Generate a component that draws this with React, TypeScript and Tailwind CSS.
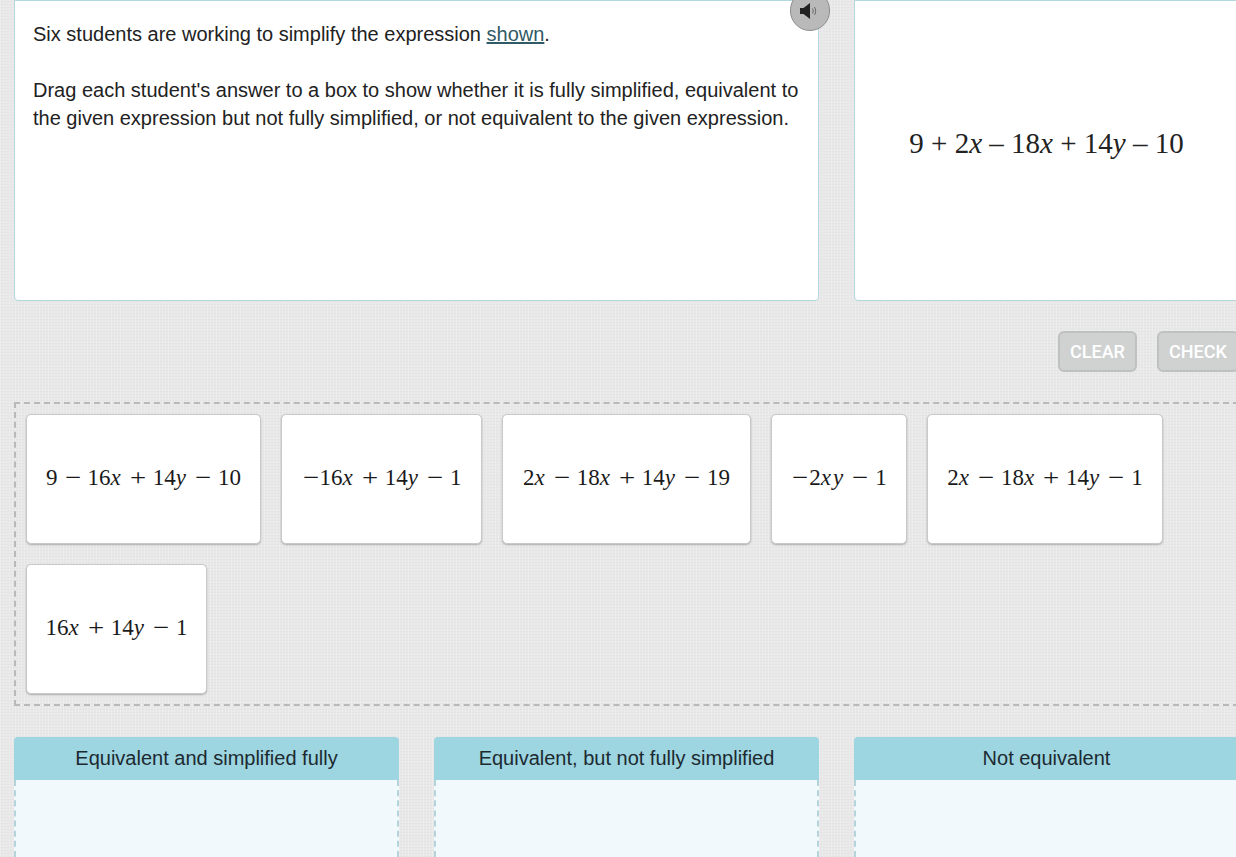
const sans = "font-['Liberation_Sans',Arial,sans-serif]"

// one math token: v = italic variable, o = operator with side space
type Tok = { t: string; k?: 'v' | 'o' | 'u' }

const n = (t: string): Tok => ({ t })
const v = (t: string): Tok => ({ t, k: 'v' })
const o = (t: string): Tok => ({ t, k: 'o' })
const u = (t: string): Tok => ({ t, k: 'u' })

const cards: { w: string; toks: Tok[] }[] = [
  { w: 'w-[235px]', toks: [n('9'), o('−'), n('16'), v('x'), o('+'), n('14'), v('y'), o('−'), n('10')] },
  { w: 'w-[201px]', toks: [u('−'), n('16'), v('x'), o('+'), n('14'), v('y'), o('−'), n('1')] },
  { w: 'w-[249px]', toks: [n('2'), v('x'), o('−'), n('18'), v('x'), o('+'), n('14'), v('y'), o('−'), n('19')] },
  { w: 'w-[136px]', toks: [u('−'), n('2'), v('xy'), o('−'), n('1')] },
  { w: 'w-[236px]', toks: [n('2'), v('x'), o('−'), n('18'), v('x'), o('+'), n('14'), v('y'), o('−'), n('1')] },
  { w: 'w-[181px]', toks: [n('16'), v('x'), o('+'), n('14'), v('y'), o('−'), n('1')] },
]

function MathText({ toks }: { toks: Tok[] }) {
  return (
    <span className="font-['Liberation_Serif','Times_New_Roman',serif] text-[23px] leading-none text-[#1a1a1a] whitespace-nowrap -mt-[3px]">
      {toks.map((tok, i) => {
        if (tok.k === 'v') return <i key={i} className="tracking-[2px]">{tok.t}</i>
        if (tok.k === 'o') return <span key={i} className="inline-block w-[18px] mx-[6px] text-center scale-x-125">{tok.t}</span>
        if (tok.k === 'u') return <span key={i} className="inline-block w-[18px] text-center scale-x-125">{tok.t}</span>
        return <span key={i}>{tok.t}</span>
      })}
    </span>
  )
}

function SpeakerIcon() {
  return (
    <svg width="22" height="20" viewBox="0 0 22 20" fill="none">
      <path d="M1 7h3.500L11 2v16l-6.500-5H1z" fill="#222" />
      <path d="M13.500 7.500c1 1.500 1 3.500 0 5" stroke="#555" strokeWidth="0.8" />
      <path d="M15.500 6c1.600 2.500 1.600 5.500 0 8" stroke="#555" strokeWidth="0.8" />
    </svg>
  )
}

function Bin({ title }: { title: string }) {
  return (
    <div className="w-[385px] shrink-0 h-[120px]">
      <div className={`h-[43px] pb-[2px] bg-[#9dd5e1] rounded-t-[4px] flex items-center justify-center text-[20px] text-[#1c2a30] ${sans}`}>
        {title}
      </div>
      <div className="h-[77px] bg-[#f1f9fc] border-x-2 border-dashed border-[#b4d3da]" />
    </div>
  )
}

export default function App() {
  return (
    <div className={`relative w-[1236px] h-[857px] overflow-hidden bg-[#e8e8e8] bg-[repeating-linear-gradient(90deg,rgba(255,255,255,0.22)_0px,rgba(255,255,255,0.22)_1px,transparent_1px,transparent_3px),repeating-linear-gradient(0deg,rgba(0,0,0,0.02)_0px,rgba(0,0,0,0.02)_1px,transparent_1px,transparent_3px)] pl-[14px] ${sans}`}>
      {/* Prompt + given expression */}
      <div className="flex gap-[35px] w-[1225px]">
        <div className="relative w-[805px] h-[301px] shrink-0 bg-white border border-[#b3d8df] rounded-b-[4px] pl-[18px] pr-[16px] pt-[19px] text-[20px] leading-[28px] text-[#222]">
          <p>
            Six students are working to simplify the expression{' '}
            <span className="text-[#2f5a66] underline">shown</span>.
          </p>
          <p className="mt-[28px]">
            Drag each student's answer to a box to show whether it is fully simplified, equivalent to the given expression but not fully simplified, or not equivalent to the given expression.
          </p>
          <button className="absolute right-[-12px] top-[-11px] w-[40px] h-[41px] rounded-full bg-[#b9b9b9] border border-[#8e8e8e] flex items-center justify-center">
            <SpeakerIcon />
          </button>
        </div>
        <div className="w-[385px] h-[301px] shrink-0 bg-white border border-[#b3d8df] rounded-b-[4px] flex items-center justify-center pb-[14px]">
          <span className="font-['Liberation_Serif','Times_New_Roman',serif] text-[29px] text-[#222] whitespace-nowrap">
            9 + 2<i>x</i> – 18<i>x</i> + 14<i>y</i> – 10
          </span>
        </div>
      </div>

      {/* Buttons */}
      <div className="flex justify-end gap-[20px] mt-[30px] w-[1225px] h-[41px]">
        <button className="w-[79px] h-[41px] rounded-[6px] bg-[#d0d2d2] border-2 border-[#bfc1c1] text-white font-['Roboto',sans-serif] font-medium text-[18px]">CLEAR</button>
        <button className="w-[82px] h-[41px] rounded-[6px] bg-[#d0d2d2] border-2 border-[#bfc1c1] text-white font-['Roboto',sans-serif] font-medium text-[18px]">CHECK</button>
      </div>

      {/* Answer tray */}
      <div className="mt-[30px] w-[1225px] h-[304px] border-2 border-dashed border-[#b9b9b9] px-[10px] pt-[10px] flex flex-wrap gap-x-[20px] gap-y-[20px] content-start">
        {cards.map((c, i) => (
          <div key={i} className={`${c.w} h-[130px] bg-white rounded-[5px] border border-[#c9c9c9] shadow-[0_1px_2px_rgba(0,0,0,0.25)] flex items-center justify-center`}>
            <MathText toks={c.toks} />
          </div>
        ))}
      </div>

      {/* Sorting bins */}
      <div className="flex gap-[35px] mt-[31px] w-[1225px]">
        <Bin title="Equivalent and simplified fully" />
        <Bin title="Equivalent, but not fully simplified" />
        <Bin title="Not equivalent" />
      </div>
    </div>
  )
}
